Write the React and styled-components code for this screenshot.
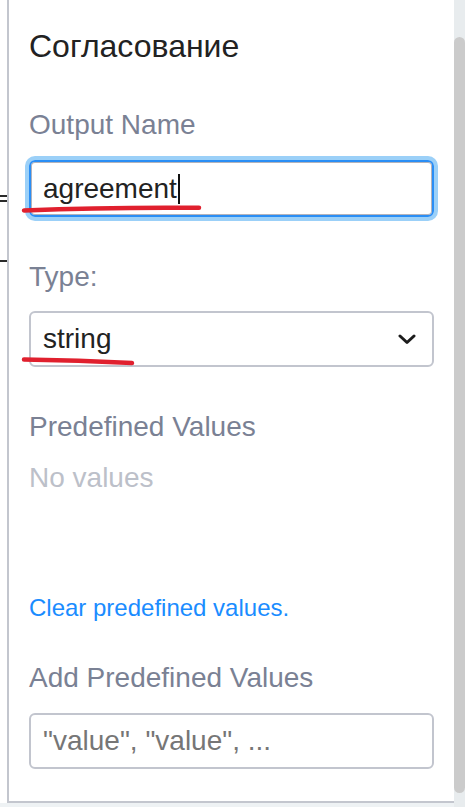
import React from 'react'
import styled, { createGlobalStyle } from 'styled-components'

const GlobalStyle = createGlobalStyle`
  html, body {
    margin: 0;
    padding: 0;
    background: #ffffff;
  }
  body {
    font-family: 'Liberation Sans', Arial, sans-serif;
  }
`

const App = () => {
  return (
    <>
      <GlobalStyle />
      <Page>
        <Main>
          <Row>
            <Gutter>
              <Mark top={195} />
              <Mark top={3} />
              <Mark top={58} />
            </Gutter>
            <Panel>
              <Title>Согласование</Title>

              <Label>Output Name</Label>
              <Field focused>
                <FieldText>agreement</FieldText>
                <Caret />
              </Field>

              <Label gap={44} below={18}>Type:</Label>
              <Field>
                <FieldText>string</FieldText>
                <Chevron width='18' height='11' viewBox='0 0 18 11'>
                  <path d='M2 2 L9 8.5 L16 2' />
                </Chevron>
              </Field>

              <Label gap={44}>Predefined Values</Label>
              <Empty>No values</Empty>

              <ClearLink href='#'>Clear predefined values.</ClearLink>

              <Label gap={40}>Add Predefined Values</Label>
              <ValuesInput placeholder='"value", "value", ...' />

              <Scribbles viewBox='0 0 445 803' width='445' height='803'>
                <path d='M15 210.5 Q 100 207 190 207.8' />
                <path d='M15 359.5 Q 70 360 123 363' />
              </Scribbles>
            </Panel>
          </Row>
          <BottomStrip />
        </Main>
        <Track>
          <Thumb />
        </Track>
      </Page>
    </>
  )
}

export default App

const Page = styled.div`
  display: flex;
  height: 807px;
  overflow: hidden;
`

const Main = styled.div`
  flex: 1;
  display: flex;
  flex-direction: column;
`

const Row = styled.div`
  display: flex;
  height: 803px;
`

const Gutter = styled.div`
  width: 7px;
  display: flex;
  flex-direction: column;
`

const Mark = styled.span`
  display: block;
  height: 2px;
  width: 7px;
  margin-top: ${(p) => p.top}px;
  background: #2a2a2a;
`

const Panel = styled.div`
  position: relative;
  flex: 1;
  box-sizing: border-box;
  display: flex;
  flex-direction: column;
  padding: 0 20px;
  background: #ffffff;
  border-left: 2px solid #c3c6ce;
  border-bottom: 2px solid #c3c6ce;
`

const Title = styled.h1`
  margin: 27px 0 0;
  font-size: 32px;
  line-height: 38px;
  font-weight: 400;
  color: #222222;
`

const Label = styled.div`
  margin-top: ${(p) => p.gap || 44}px;
  margin-bottom: ${(p) => p.below || 19}px;
  font-size: 28px;
  line-height: 32px;
  color: #7a8194;
`

const Field = styled.div`
  box-sizing: border-box;
  display: flex;
  align-items: center;
  height: ${(p) => (p.focused ? 57 : 56)}px;
  padding: 0 16px 0 12px;
  border: 2px solid ${(p) => (p.focused ? '#2a8ef5' : '#c2c5ce')};
  border-radius: 6px;
  box-shadow: ${(p) =>
    p.focused ? '0 0 0 4px #9bd0f8, inset 0 0 0 1px #b3b3bb' : 'none'};
  font-size: 28px;
  line-height: 32px;
  color: #222222;
`

const FieldText = styled.span`
  white-space: pre;
`

const Caret = styled.span`
  display: inline-block;
  width: 2px;
  height: 30px;
  margin-left: 1px;
  background: #111111;
`

const Chevron = styled.svg`
  margin-left: auto;
  fill: none;
  stroke: #1c1c1c;
  stroke-width: 3;
  stroke-linecap: round;
  stroke-linejoin: round;
`

const Empty = styled.div`
  font-size: 28px;
  line-height: 32px;
  color: #bcc0c9;
`

const ClearLink = styled.a`
  margin-top: 100px;
  font-size: 24px;
  line-height: 28px;
  color: #1a8cff;
  text-decoration: none;
  align-self: flex-start;
`

const ValuesInput = styled.input`
  box-sizing: border-box;
  width: 100%;
  height: 56px;
  padding: 0 12px;
  border: 2px solid #c2c5ce;
  border-radius: 6px;
  font-family: 'Liberation Sans', Arial, sans-serif;
  font-size: 28px;
  line-height: 32px;
  color: #222222;
  outline: none;

  &::placeholder {
    color: #767676;
  }
`

const Scribbles = styled.svg`
  position: absolute;
  left: 0;
  top: 0;
  pointer-events: none;
  fill: none;
  stroke: #e0202e;
  stroke-width: 4.5;
  stroke-linecap: round;
`

const BottomStrip = styled.div`
  flex: 1;
  background: #eef2f4;
`

const Track = styled.div`
  width: 11px;
  box-sizing: border-box;
  display: flex;
  flex-direction: column;
  padding: 37px 0 14px;
  background: #e8ecee;
`

const Thumb = styled.div`
  flex: 1;
  background: #cbcbcb;
  border-radius: 6px;
`
